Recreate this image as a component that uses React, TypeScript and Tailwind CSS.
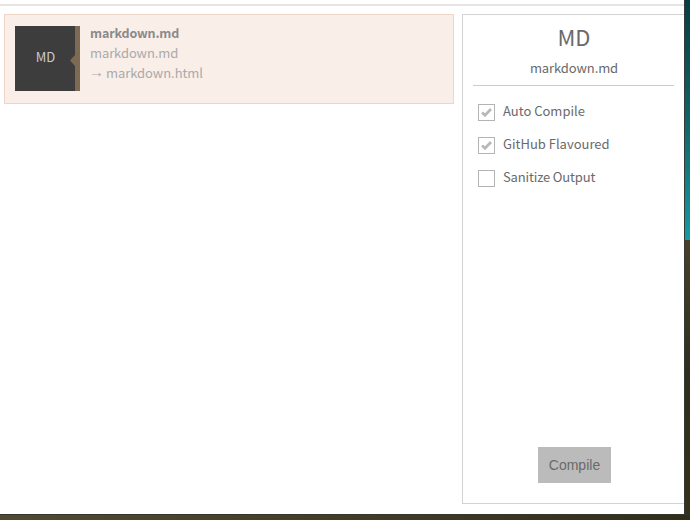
const sans = 'font-["Noto_Sans_CJK_SC","Source_Sans_Pro",sans-serif]';

function Option({ label, checked = false, labelClass = "" }: { label: string; checked?: boolean; labelClass?: string }) {
  return (
    <label className="flex h-[17px] items-center gap-2">
      <span className="flex size-[17px] items-center justify-center border border-[#b4b4b4] bg-white">
        {checked && (
          <svg width="11" height="9" viewBox="0 0 11 9" fill="none">
            <path d="M1 4.6 4 7.3 10 1" stroke="#b8b8b8" strokeWidth="2.7" />
          </svg>
        )}
      </span>
      <span className={`-mt-[4px] text-[13px] leading-[17px] whitespace-nowrap ${labelClass}`}>{label}</span>
    </label>
  );
}

export default function App() {
  return (
    <div
      className={`${sans} flex h-[520px] w-[690px] flex-col overflow-hidden bg-[#38331f] text-[#6a6a6a]`}
    >
      <div className="flex h-[514px]">
        <main className="flex h-[514px] w-[684px] flex-col bg-white">
          <div className="h-[6px] shrink-0 border-b-2 border-[#e8e4e2]" />
          <div className="flex pt-2 pl-1">
            <section className="flex h-[90px] w-[450px] gap-[10px] border border-[#f0d4c8] bg-[#f9eee8] pt-[11px] pl-[10px]">
              <div className="flex size-[65px] bg-[#3d3d3d]">
                <div className="flex flex-1 items-center justify-center pr-[4px] pb-[3px] text-[13px] text-[#ccc]">
                  MD
                </div>
                <svg width="10" height="65" viewBox="0 0 10 65" className="-ml-[10px]">
                  <path d="M5 0H10V65H5V40L0 34.5 5 29Z" fill="#7c6a53" />
                </svg>
              </div>
              <div className="-mt-[3px] text-[13px] leading-5 text-[#aaa]">
                <div className="text-[12.5px] font-bold tracking-[-0.15px] text-[#8a8a8a]">markdown.md</div>
                <div className="tracking-[-0.1px]">markdown.md</div>
                <div className="flex h-5 tracking-[-0.06px]">
                  <span className="-mt-px w-4 font-['Liberation_Sans',sans-serif] text-[15px] -indent-px">→</span>
                  <span>markdown.html</span>
                </div>
              </div>
            </section>
            <aside className="ml-2 flex h-[490px] w-[222px] flex-col border-y border-l border-[#d3d3d3]">
              <header className="mx-[10px] flex h-[71px] flex-col items-center border-b border-[#ccc]">
                <h1 className="mt-[6px] ml-px text-[22px] leading-[30px]">MD</h1>
                <div className="mt-[7px] ml-px text-[13px] leading-5 tracking-[-0.1px]">markdown.md</div>
              </header>
              <div className="mt-[18px] ml-[15px] flex flex-col gap-4">
                <Option label="Auto Compile" checked />
                <Option label="GitHub Flavoured" checked />
                <Option label="Sanitize Output" labelClass="tracking-[-0.15px]" />
              </div>
              <button className="mt-auto mb-5 ml-[2px] h-9 w-[73px] self-center bg-[#bbb] font-['Liberation_Sans',sans-serif] text-[14px] text-[#6a6a6a]">
                Compile
              </button>
            </aside>
          </div>
        </main>
        <div className="flex w-[6px] flex-col border-l border-[#343b37]">
          <div className="h-[240px] bg-linear-to-b from-[#073d46] via-[#116468] to-[#179ba3]" />
          <div className="flex-1 bg-linear-to-b from-[#49402b] via-[#302d1e] to-[#38301a]" />
        </div>
      </div>
      <div className="h-[6px] border-t border-[#34352c] bg-linear-to-r from-[#514a31] via-[#423c27] to-[#302d19]" />
    </div>
  );
}
